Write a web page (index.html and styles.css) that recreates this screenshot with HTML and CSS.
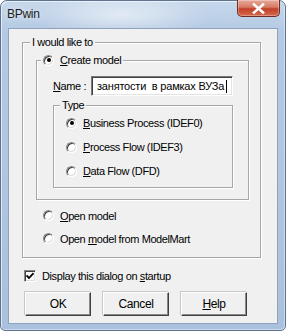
FILE: index.html
```html
<!DOCTYPE html>
<html lang="en">

<head>
    <meta charset="UTF-8">
    <title>BPwin</title>
    <link rel="stylesheet" href="styles.css">
</head>

<body>
    <div class="window">
        <!-- title bar -->
        <div class="titlebar">
            <span class="title">BPwin</span>
            <span class="close">
                <svg width="13" height="11" viewBox="0 0 13 11">
                    <path d="M2 1.5 L11 9.5 M11 1.5 L2 9.5" stroke="#fff" stroke-width="2.6" stroke-linecap="square" />
                </svg>
            </span>
        </div>

        <div class="client">
            <div class="group outer">
                <div class="legend">I would like to</div>

                <div class="group create">
                    <div class="legend with-radio"><span class="radio checked"></span><span><u>C</u>reate model</span></div>

                    <div class="name-row">
                        <label class="name-label"><u>N</u>ame :</label>
                        <div class="input">занятости&nbsp; в рамках ВУЗа<span class="caret"></span></div>
                    </div>

                    <div class="group type">
                        <div class="legend">Type</div>
                        <div class="option"><span class="radio checked"></span><span><u>B</u>usiness Process (IDEF0)</span></div>
                        <div class="option"><span class="radio"></span><span><u>P</u>rocess Flow (IDEF3)</span></div>
                        <div class="option"><span class="radio"></span><span><u>D</u>ata Flow (DFD)</span></div>
                    </div>
                </div>

                <div class="option open first"><span class="radio"></span><span><u>O</u>pen model</span></div>
                <div class="option open"><span class="radio"></span><span>Open <u>m</u>odel from ModelMart</span></div>
            </div>

            <div class="check-row">
                <span class="checkbox">
                    <svg width="8" height="8" viewBox="0 0 8 8">
                        <path d="M0.5 3.5 L3 6 L7.5 1.2" stroke="#000" stroke-width="1.8" fill="none" />
                    </svg>
                </span>
                <span>Display this dialog on <u>s</u>tartup</span>
            </div>

            <div class="buttons">
                <div class="button">OK</div>
                <div class="button">Cancel</div>
                <div class="button"><u>H</u>elp</div>
            </div>
        </div>
    </div>
</body>

</html>
```

FILE: styles.css
```css
body {
    margin: 0;
    background: #fff;
    font-family: 'Liberation Sans', Arial, sans-serif;
    font-size: 11px;
    color: #000;
}

u {
    text-decoration: underline;
    text-underline-offset: 1px;
}

/* window frame */
.window {
    width: 286px;
    height: 331px;
    box-sizing: border-box;
    border: 1px solid #5d7390;
    border-radius: 7px 7px 5px 5px;
    background:
        radial-gradient(ellipse 90px 22px at 120px 14px, rgba(255, 255, 255, .55), rgba(255, 255, 255, 0)),
        linear-gradient(180deg, #c7d8ec 0%, #b4c9e3 30px, #aac1de 100%);
    box-shadow: inset 1px 1px 0 rgba(255, 255, 255, .6), inset -1px -1px 0 rgba(255, 255, 255, .4);
    display: flex;
    flex-direction: column;
}

.titlebar {
    height: 27px;
    display: flex;
    justify-content: space-between;
    align-items: flex-start;
}

.title {
    margin: 6px 0 0 6px;
    font-size: 12px;
    letter-spacing: -0.3px;
    color: #1b1b1b;
    text-shadow: 0 0 6px rgba(255, 255, 255, .9);
}

.close {
    width: 43px;
    height: 17px;
    margin-right: 5px;
    margin-top: -1px;
    box-sizing: border-box;
    border: 1px solid #6c2f25;
    border-top: none;
    border-radius: 0 0 5px 5px;
    background: linear-gradient(180deg, #e6aa9c 0%, #d77a63 45%, #c0402a 55%, #d7694c 100%);
    box-shadow: inset 0 0 0 1px rgba(255, 255, 255, .3);
    display: flex;
    align-items: center;
    justify-content: center;
}

/* dialog area */
.client {
    margin: 0 7px;
    height: 296px;
    box-sizing: border-box;
    border: 1px solid #8fa3bd;
    background: #f0f0f0;
    display: flex;
    flex-direction: column;
}

.group {
    box-sizing: border-box;
    border: 1px solid #a6a6a6;
    box-shadow: inset 1px 1px 0 #fff, 1px 1px 0 #fff;
    display: flex;
    flex-direction: column;
}

.legend {
    margin-top: -8px;
    height: 14px;
    line-height: 14px;
    padding: 0 2px;
    background: #f0f0f0;
    align-self: flex-start;
    letter-spacing: -0.4px;
}

.outer {
    margin: 13px 0 0 13px;
    width: 239px;
    height: 216px;
}

.outer > .legend {
    margin-left: 7px;
}

.create {
    margin: 11px 0 0 13px;
    width: 213px;
    height: 140px;
}

.create > .legend {
    margin-left: 4px;
    display: flex;
    align-items: center;
    gap: 6px;
}

.name-row {
    margin: 9px 0 0 16px;
    display: flex;
    align-items: center;
}

.name-label {
    width: 38px;
    letter-spacing: -0.4px;
}

.input {
    width: 142px;
    height: 20px;
    box-sizing: border-box;
    border: 1px solid;
    border-color: #7a7a7a #fff #fff #7a7a7a;
    box-shadow: inset 1px 1px 0 #404040, inset -1px -1px 0 #e3e3e3;
    background: #fff;
    padding-left: 5px;
    display: flex;
    align-items: center;
    white-space: nowrap;
    overflow: hidden;
    letter-spacing: -0.2px;
}

.caret {
    width: 1px;
    height: 13px;
    margin-left: 2px;
    background: #000;
}

.type {
    margin: 9px 0 0 16px;
    width: 180px;
    height: 83px;
}

.type > .legend {
    margin-left: 6px;
    margin-bottom: -1px;
}

.option {
    height: 24px;
    display: flex;
    align-items: center;
    gap: 6px;
    letter-spacing: -0.4px;
}

.type .option {
    margin-left: 12px;
}

.open {
    margin-left: 20px;
    height: 23px;
}

.open.first {
    margin-top: 4px;
}

/* classic radio */
.radio {
    width: 11px;
    height: 11px;
    flex: none;
    box-sizing: border-box;
    border-radius: 50%;
    border: 1px solid;
    border-color: #8a8a8a #fff #fff #8a8a8a;
    box-shadow: inset 1px 1px 0 #404040, inset -1px -1px 0 #dcdcdc;
    background: #fff;
    display: inline-flex;
    align-items: center;
    justify-content: center;
}

.radio.checked::after {
    content: "";
    width: 4px;
    height: 4px;
    border-radius: 50%;
    background: #000;
}

.check-row {
    margin: 10px 0 0 15px;
    height: 16px;
    display: flex;
    align-items: center;
    gap: 6px;
    letter-spacing: -0.4px;
}

.checkbox {
    width: 12px;
    height: 12px;
    box-sizing: border-box;
    border: 1px solid;
    border-color: #8a8a8a #fff #fff #8a8a8a;
    box-shadow: inset 1px 1px 0 #404040, inset -1px -1px 0 #dcdcdc;
    background: #fff;
    display: flex;
    align-items: center;
    justify-content: center;
}

.buttons {
    margin: 8px 0 0 16px;
    display: flex;
    gap: 12px;
}

.button {
    width: 66px;
    height: 24px;
    box-sizing: border-box;
    border: 1px solid;
    border-color: #fff #404040 #404040 #fff;
    box-shadow: inset -1px -1px 0 #8a8a8a, -1px -1px 0 #c8c8c8;
    background: #f0f0f0;
    display: flex;
    align-items: center;
    justify-content: center;
    font-size: 12px;
    letter-spacing: -0.4px;
}
```
